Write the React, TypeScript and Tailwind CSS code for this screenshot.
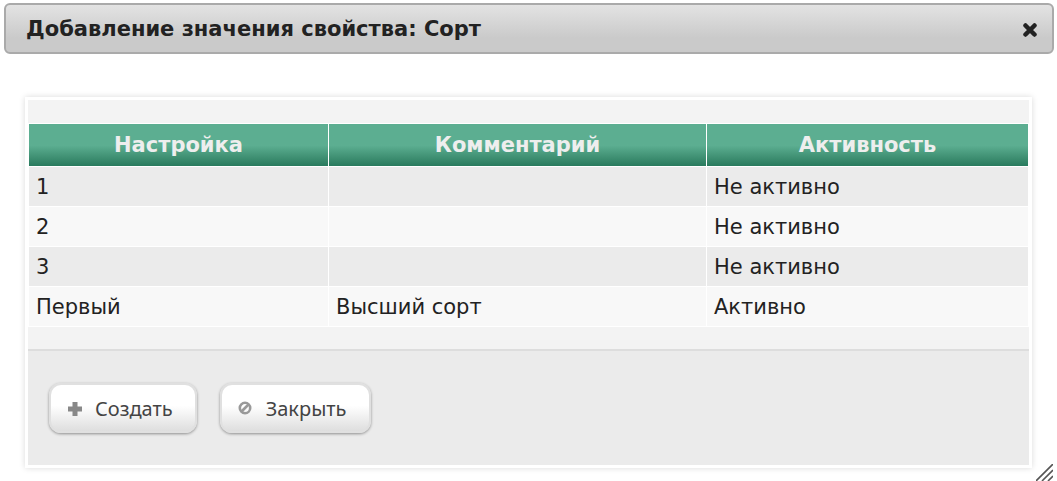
import React from "react";

type Value = {
  name: string;
  comment: string;
  active: boolean;
};

const values: Value[] = [
  { name: "1", comment: "", active: false },
  { name: "2", comment: "", active: false },
  { name: "3", comment: "", active: false },
  { name: "Первый", comment: "Высший сорт", active: true },
];

const buttonClass =
  "flex h-[50px] items-center gap-3 rounded-xl border-2 border-[#e0e0e0] bg-linear-to-b from-white from-45% to-[#dedede] pt-0.5 pl-4 pr-[22px] font-['Noto_Sans','Open_Sans',sans-serif] text-[20px] text-[#444] shadow-[0_1px_3px_rgba(0,0,0,0.4)]";

const cellClass = "border border-white px-[7px] pt-0.5 pb-0";

function CloseIcon() {
  return (
    <svg width="16" height="16" viewBox="0 0 16 16" aria-hidden="true">
      <path d="M3.5 4.5l9 9M12.5 4.5l-9 9" stroke="#222" strokeWidth="4.5" strokeLinecap="round" />
    </svg>
  );
}

function PlusIcon() {
  return (
    <svg width="16" height="16" viewBox="0 0 16 16" aria-hidden="true">
      <path d="M8 1v14M1 8h14" stroke="#888" strokeWidth="5" />
    </svg>
  );
}

function CancelIcon() {
  return (
    <svg width="16" height="16" viewBox="0 0 16 16" fill="none" aria-hidden="true">
      <circle cx="7" cy="7" r="5.2" stroke="#999" strokeWidth="2.6" />
      <path d="M3.5 10.5l7-7" stroke="#999" strokeWidth="2.6" />
    </svg>
  );
}

export default function App() {
  return (
    <div
      role="dialog"
      aria-labelledby="dialog-title"
      className="relative bg-white px-1 pt-[3px] pb-[13px] font-['DejaVu_Sans',Verdana,sans-serif] text-[#222]"
    >
      {/* Title bar */}
      <header className="mr-[-1px] flex h-[51px] items-center justify-between rounded-md border-2 border-[#aaa] bg-linear-to-b from-[#e3e3e3] to-[#cacaca] to-70% pl-5 pr-[14px]">
        <h1 id="dialog-title" className="pt-0.5 text-[21px] font-bold">
          Добавление значения свойства: Сорт
        </h1>
        <button type="button" aria-label="Закрыть окно">
          <CloseIcon />
        </button>
      </header>

      <div className="mx-[21px] mt-[43px] border-3 border-white bg-[#f3f3f3] shadow-[0_0_6px_rgba(0,0,0,0.15)]">
        {/* Values */}
        <div className="pt-[23px] pb-[22px]">
          <table className="w-full table-fixed border-collapse text-left text-[21px]">
            <colgroup>
              <col className="w-[30%]" />
              <col className="w-[37.8%]" />
              <col />
            </colgroup>
            <thead>
              <tr className="h-[43px] text-center text-[#eee]">
                {["Настройка", "Комментарий", "Активность"].map((title) => (
                  <th
                    key={title}
                    className="border border-white bg-[#5cae91] bg-linear-to-b from-[#5cae91] from-50% to-[#26785b] bg-no-repeat bg-origin-border pt-0.5 font-bold"
                  >
                    {title}
                  </th>
                ))}
              </tr>
            </thead>
            <tbody>
              {values.map((v) => (
                <tr key={v.name} className="h-10 odd:bg-[#ebebeb] even:bg-[#f8f8f8]">
                  <td className={cellClass}>{v.name}</td>
                  <td className={cellClass}>{v.comment}</td>
                  <td className={cellClass}>{v.active ? "Активно" : "Не активно"}</td>
                </tr>
              ))}
            </tbody>
          </table>
        </div>

        {/* Actions */}
        <footer className="flex gap-[23px] border-t-2 border-[#ddd] bg-[#ebebeb] px-[21px] py-8">
          <button type="button" className={buttonClass}>
            <PlusIcon />
            Создать
          </button>
          <button type="button" className={buttonClass}>
            <CancelIcon />
            Закрыть
          </button>
        </footer>
      </div>

      {/* Resize grip */}
      <svg
        className="absolute right-1 bottom-0"
        width="17"
        height="17"
        viewBox="0 0 17 17"
        aria-hidden="true"
      >
        <path d="M0 17L17 0M6 17L17 6M12 17L17 12" stroke="#555" strokeWidth="1.6" />
      </svg>
    </div>
  );
}
